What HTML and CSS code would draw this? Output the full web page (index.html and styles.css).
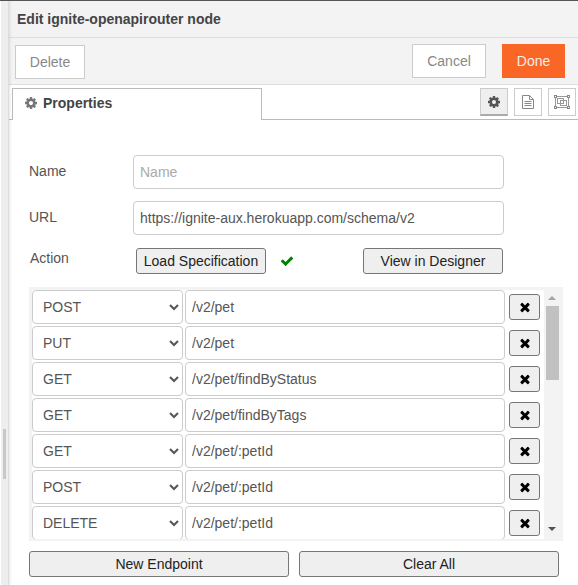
FILE: index.html
```html
<!DOCTYPE html>
<html lang="en">
<head>
  <meta charset="UTF-8" />
  <title>Edit ignite-openapirouter node</title>
  <link rel="stylesheet" href="styles.css">
</head>
<body>
  <svg class="defs" width="0" height="0">
    <symbol id="cog" viewBox="0 0 1792 1792"><path d="M1152 896q0-106-75-181t-181-75-181 75-75 181 75 181 181 75 181-75 75-181zm512-109v222q0 12-8 23t-20 13l-185 28q-19 54-39 91 35 50 107 138 10 12 10 25t-9 23q-27 37-99 108t-94 71q-12 0-26-9l-138-108q-44 23-91 38-16 136-29 186-7 28-36 28h-222q-14 0-24.5-8.5t-11.5-21.5l-28-184q-49-16-90-37l-141 107q-10 9-25 9-14 0-25-11-126-114-165-168-7-10-7-23 0-12 8-23 15-21 51-66.5t54-70.5q-27-50-41-99l-183-27q-13-2-21-12.5t-8-23.5v-222q0-12 8-23t19-13l186-28q14-46 39-92-40-57-107-138-10-12-10-24 0-10 9-23 26-36 98.5-107.5t94.5-71.5q13 0 26 10l138 107q44-23 91-38 16-136 29-186 7-28 36-28h222q14 0 24.5 8.5t11.5 21.5l28 184q49 16 90 37l142-107q9-9 24-9 13 0 25 10 129 119 165 170 7 8 7 22 0 12-8 23-15 21-51 66.5t-54 70.5q26 50 41 98l183 28q13 2 21 12.5t8 23.5z"/></symbol>
    <symbol id="times" viewBox="0 0 1792 1792"><path d="M1490 1322q0 40-28 68l-136 136q-28 28-68 28t-68-28l-294-294-294 294q-28 28-68 28t-68-28l-136-136q-28-28-28-68t28-68l294-294-294-294q-28-28-28-68t28-68l136-136q28-28 68-28t68 28l294 294 294-294q28-28 68-28t68 28l136 136q28 28 28 68t-28 68l-294 294 294 294q28 28 28 68z"/></symbol>
  </svg>

  <div class="tray">
    <div class="handle"></div>
    <div class="tray-main">
      <div class="tray-title">Edit ignite-openapirouter node</div>

      <div class="tray-toolbar">
        <button class="btn btn-delete">Delete</button>
        <div class="toolbar-right">
          <button class="btn btn-cancel">Cancel</button>
          <button class="btn btn-done">Done</button>
        </div>
      </div>

      <div class="tabs">
        <div class="tab"><svg class="tab-cog"><use href="#cog"/></svg>Properties</div>
        <div class="tab-links">
          <a class="tab-link active"><svg class="link-cog"><use href="#cog"/></svg></a>
          <a class="tab-link">
            <svg class="link-svg" viewBox="0 0 12 14">
              <path d="M0.5 0.5h7l4 4v9h-11z M7.5 0.5v4h4"/>
              <path d="M2.5 6.5h7 M2.5 8.5h7 M2.5 10.5h7"/>
            </svg>
          </a>
          <a class="tab-link">
            <svg class="frame-svg" viewBox="0 0 16 14">
              <rect class="frame" x="1.5" y="1.5" width="13" height="11"/>
              <rect class="frame-in" x="3.5" y="3.5" width="6" height="5"/>
              <rect class="frame-in" x="6.5" y="5.5" width="6" height="5"/>
              <rect class="corner" x="0.5" y="0.5" width="2" height="2"/>
              <rect class="corner" x="13.5" y="0.5" width="2" height="2"/>
              <rect class="corner" x="0.5" y="11.5" width="2" height="2"/>
              <rect class="corner" x="13.5" y="11.5" width="2" height="2"/>
            </svg>
          </a>
        </div>
      </div>

      <div class="form">
        <div class="form-row">
          <label>Name</label>
          <input type="text" class="text-input" placeholder="Name" />
        </div>
        <div class="form-row">
          <label>URL</label>
          <input type="text" class="text-input" value="https://ignite-aux.herokuapp.com/schema/v2" />
        </div>
        <div class="action-row">
          <label>Action</label>
          <button class="sys-btn load-btn">Load Specification</button>
          <svg class="check" viewBox="0 0 1792 1792"><path d="M1671 566q0 40-28 68l-724 724-136 136q-28 28-68 28t-68-28l-136-136-362-362q-28-28-28-68t28-68l136-136q28-28 68-28t68 28l294 295 656-657q28-28 68-28t68 28l136 136q28 28 28 68z"/></svg>
          <button class="sys-btn designer-btn">View in Designer</button>
        </div>

        <div class="endpoints">
          <div class="endpoint-list">
            <div class="endpoint">
              <select class="method"><option>POST</option></select>
              <input type="text" class="path" value="/v2/pet" />
              <button class="sys-btn remove"><svg><use href="#times"/></svg></button>
            </div>
            <div class="endpoint">
              <select class="method"><option>PUT</option></select>
              <input type="text" class="path" value="/v2/pet" />
              <button class="sys-btn remove"><svg><use href="#times"/></svg></button>
            </div>
            <div class="endpoint">
              <select class="method"><option>GET</option></select>
              <input type="text" class="path" value="/v2/pet/findByStatus" />
              <button class="sys-btn remove"><svg><use href="#times"/></svg></button>
            </div>
            <div class="endpoint">
              <select class="method"><option>GET</option></select>
              <input type="text" class="path" value="/v2/pet/findByTags" />
              <button class="sys-btn remove"><svg><use href="#times"/></svg></button>
            </div>
            <div class="endpoint">
              <select class="method"><option>GET</option></select>
              <input type="text" class="path" value="/v2/pet/:petId" />
              <button class="sys-btn remove"><svg><use href="#times"/></svg></button>
            </div>
            <div class="endpoint">
              <select class="method"><option>POST</option></select>
              <input type="text" class="path" value="/v2/pet/:petId" />
              <button class="sys-btn remove"><svg><use href="#times"/></svg></button>
            </div>
            <div class="endpoint">
              <select class="method"><option>DELETE</option></select>
              <input type="text" class="path" value="/v2/pet/:petId" />
              <button class="sys-btn remove"><svg><use href="#times"/></svg></button>
            </div>
          </div>
          <div class="scrollbar">
            <span class="arrow-up"></span>
            <span class="thumb"></span>
            <span class="arrow-down"></span>
          </div>
        </div>

        <div class="list-buttons">
          <button class="sys-btn">New Endpoint</button>
          <button class="sys-btn">Clear All</button>
        </div>
      </div>
    </div>
  </div>
</body>
</html>
```

FILE: styles.css
```css
* {
  box-sizing: border-box;
}

html, body {
  margin: 0;
  height: 585px;
  overflow: hidden;
}

body {
  font-family: "Liberation Sans", Arial, sans-serif;
  font-size: 14px;
  color: #555;
  background: #fff;
}

.defs {
  position: absolute;
}

.tray {
  display: flex;
  height: 585px;
  border-top: 1px solid #555;
}

.handle {
  position: relative;
  z-index: 1;
  width: 9px;
  flex: none;
  background: #eee;
  border-left: 1px solid #fff;
  border-right: 1px solid #ddd;
  padding: 428px 2px 0 2px;
  box-shadow: 1px 0 3px rgba(0,0,0,0.1);
}

.handle::before {
  content: "";
  display: block;
  height: 50px;
  background: #c8c8c8;
}

.tray-main {
  flex: 1;
  min-width: 0;
}

.tray-title {
  height: 37px;
  padding: 10px 8px 0;
  font-weight: bold;
  color: #444;
  background: #f3f3f3;
  border-bottom: 1px solid #ddd;
}

.tray-toolbar {
  display: flex;
  justify-content: space-between;
  height: 47px;
  padding: 6px 13px 0 6px;
  background: #f3f3f3;
  border-bottom: 1px solid #ddd;
}

.toolbar-right {
  display: flex;
  gap: 16px;
}

.btn {
  height: 34px;
  font: inherit;
  color: #888;
  background: #fff;
  border: 1px solid #ccc;
}

.btn-delete {
  width: 70px;
  margin-top: 1px;
}

.btn-cancel {
  width: 74px;
}

.btn-done {
  width: 63px;
  color: #eee;
  background: #f96625;
  border-color: #f96625;
}

.tabs {
  display: flex;
  justify-content: space-between;
  height: 35px;
  padding: 3px 2px 0 3px;
  border-bottom: 1px solid #bbb;
}

.tab {
  display: flex;
  align-items: center;
  width: 250px;
  height: 32px;
  padding: 0 0 4px 11px;
  font-weight: bold;
  color: #444;
  background: #fff;
  border: 1px solid #bbb;
  border-bottom: none;
}

.tab-cog {
  width: 14px;
  height: 14px;
  margin-right: 5px;
  fill: #777;
}

.tab-links {
  display: flex;
  gap: 6px;
}

.tab-link {
  display: flex;
  align-items: center;
  justify-content: center;
  width: 28px;
  height: 28px;
  border: 1px solid #ccc;
  background: #fff;
}

.tab-link.active {
  background: #efefef;
  border-bottom: 2px solid #aaa;
}

.link-cog {
  width: 14px;
  height: 14px;
  fill: #555;
}

.link-svg {
  width: 12px;
  height: 14px;
  fill: none;
  stroke: #888;
}

.frame-svg {
  width: 16px;
  height: 14px;
  fill: none;
}

.frame, .frame-in {
  stroke: #999;
}

.corner {
  fill: #fff;
  stroke: #888;
}

.form {
  padding: 35px 15px 0 20px;
}

.form-row {
  display: flex;
  align-items: center;
  height: 34px;
  margin-bottom: 12px;
}

.form-row label {
  width: 104px;
  margin-top: -3px;
}

.text-input {
  width: 371px;
  height: 34px;
  padding: 0 6px;
  font: inherit;
  color: #555;
  border: 1px solid #ccc;
  border-radius: 4px;
  outline: none;
}

.text-input::placeholder {
  color: #aaa;
}

.action-row {
  display: flex;
  align-items: flex-start;
  height: 26px;
  margin-top: 13px;
}

.action-row label {
  width: 107px;
  margin: 2px -1px 0 1px;
  flex: none;
}

.sys-btn {
  height: 26px;
  padding: 0;
  font: inherit;
  color: #222;
  background: #efefef;
  border: 1px solid #767676;
  border-radius: 3px;
}

.load-btn {
  width: 130px;
}

.check {
  width: 14px;
  height: 14px;
  margin: 6px 0 0 14px;
  fill: #008000;
}

.designer-btn {
  width: 140px;
  margin-left: 69px;
}

.endpoints {
  display: flex;
  width: 534px;
  height: 254px;
  margin-top: 13px;
  border: solid #f3f3f3;
  border-width: 3px 3px 2px;
  background: #fff;
}

.endpoint-list {
  display: flex;
  flex-direction: column;
  gap: 2px;
  width: 512px;
  overflow: hidden;
}

.endpoint {
  display: flex;
  flex: none;
  align-items: center;
  height: 34px;
}

.method {
  width: 151px;
  height: 34px;
  padding: 0 6px;
  font: inherit;
  color: #555;
  background: #fff;
  border: 1px solid #ccc;
  border-radius: 4px;
  outline: none;
}

.path {
  width: 320px;
  height: 34px;
  margin-left: 2px;
  padding: 0 6px;
  font: inherit;
  color: #555;
  border: 1px solid #ccc;
  border-radius: 4px;
  outline: none;
}

.remove {
  display: flex;
  align-items: center;
  justify-content: center;
  width: 31px;
  margin-left: 4px;
}

.remove svg {
  width: 14px;
  height: 14px;
  fill: #000;
}

.scrollbar {
  display: flex;
  flex-direction: column;
  align-items: center;
  flex: 1;
  padding-top: 6px;
  background: #f3f3f3;
}

.arrow-up, .arrow-down {
  width: 0;
  height: 0;
  border: 4px solid transparent;
}

.arrow-up {
  border-top: none;
  border-bottom: 4px solid #a3a3a3;
}

.arrow-down {
  margin-top: 147px;
  border-bottom: none;
  border-top: 4px solid #505050;
}

.thumb {
  width: 13px;
  height: 74px;
  margin-top: 6px;
  background: #c1c1c1;
}

.list-buttons {
  display: flex;
  gap: 10px;
  margin-top: 10px;
}

.list-buttons .sys-btn {
  width: 260px;
}
```
